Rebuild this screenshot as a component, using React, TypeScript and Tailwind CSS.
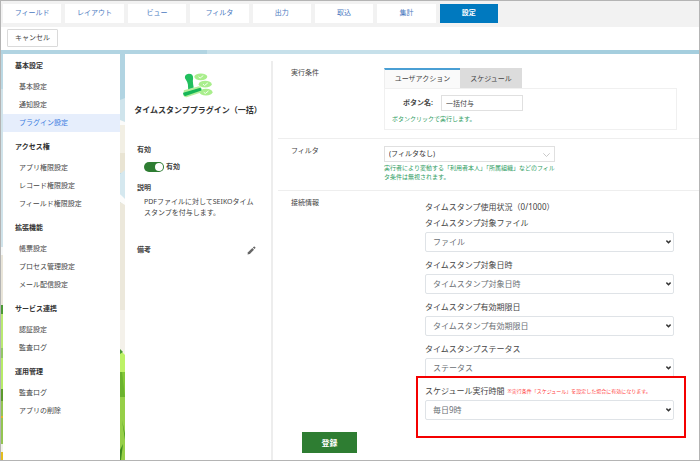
import { clsx } from 'clsx';
import { type ReactNode } from 'react';

const tabs = ['フィールド', 'レイアウト', 'ビュー', 'フィルタ', '出力', '取込', '集計', '設定'];

const menuGroups = [
    { title: '基本設定', items: ['基本設定', '通知設定', 'プラグイン設定'] },
    { title: 'アクセス権', items: ['アプリ権限設定', 'レコード権限設定', 'フィールド権限設定'] },
    { title: '拡張機能', items: ['帳票設定', 'プロセス管理設定', 'メール配信設定'] },
    { title: 'サービス連携', items: ['認証設定', '監査ログ'] },
    { title: '運用管理', items: ['監査ログ', 'アプリの削除'] },
];

const connectionFields = [
    { id: 'file', label: 'タイムスタンプ対象ファイル', value: 'ファイル' },
    { id: 'date', label: 'タイムスタンプ対象日時', value: 'タイムスタンプ対象日時' },
    { id: 'expiry', label: 'タイムスタンプ有効期限日', value: 'タイムスタンプ有効期限日' },
    { id: 'status', label: 'タイムスタンプステータス', value: 'ステータス' },
];

function LeftScenery() {
    return (
        <svg className="w-[2px] shrink-0 self-stretch" viewBox="0 0 2 406" preserveAspectRatio="none" aria-hidden="true">
            <rect width="2" height="406" fill="#bcd9e4" />
            <rect y="35" width="2" height="158" fill="#d0e3ea" />
            <rect y="193" width="2" height="8" fill="#f6f8f8" />
            <rect y="201" width="2" height="50" fill="#e9e5d9" />
            <rect y="251" width="2" height="9" fill="#4b9a34" />
            <rect y="260" width="2" height="34" fill="#b9ea72" />
            <rect y="294" width="2" height="10" fill="#93c765" />
            <rect y="304" width="2" height="31" fill="#b6ec68" />
            <rect y="335" width="2" height="12" fill="#5c9a2c" />
            <rect y="347" width="2" height="43" fill="#93c552" />
            <rect y="362" width="2" height="2" fill="#dfb62c" />
            <rect y="390" width="2" height="8" fill="#f1f3ea" />
            <rect y="398" width="2" height="8" fill="#e3bd1f" />
        </svg>
    );
}

function MiddleScenery() {
    return (
        <svg className="w-[5px] shrink-0 self-stretch" viewBox="0 0 5 406" preserveAspectRatio="none" aria-hidden="true">
            <rect width="5" height="406" fill="#b1d4e2" />
            <path d="M0 46L5 44V70H0Z" fill="#cfe4ec" />
            <path d="M0 66L5 68V75H0Z" fill="#fbfbfa" />
            <rect y="71" width="5" height="28" fill="#f2efe4" />
            <rect y="99" width="5" height="20" fill="#e9e4d3" />
            <path d="M0 120L5 116V147L0 140Z" fill="#d5e8ef" />
            <path d="M0 140L5 145V152L0 148Z" fill="#fcfcfb" />
            <path d="M0 148L5 151V256H0Z" fill="#ece8db" />
            <rect y="256" width="5" height="46" fill="#f4f1ea" />
            <path d="M0 296L5 301V318H0Z" fill="#bdf266" />
            <path d="M0 295L3 298L0 300Z" fill="#4b9a34" />
            <rect y="318" width="5" height="25" fill="#83c838" />
            <path d="M0 318H2L5 343H0Z" fill="#6cb32e" />
            <rect y="343" width="5" height="63" fill="#96cf48" />
            <path d="M2 366L5 380V386Z" fill="#4c9724" />
            <path d="M0 396L3 390L1 406H0Z" fill="#3e8a1f" />
        </svg>
    );
}

function StampIcon() {
    return (
        <svg className="h-[26px] w-[30px]" viewBox="0 0 30 26" aria-hidden="true">
            <g fill="#a9ee8c">
                <ellipse cx="17.8" cy="3.8" rx="6.5" ry="3.4" />
                <ellipse cx="22.2" cy="11.2" rx="6.5" ry="3.4" />
                <ellipse cx="23" cy="19.2" rx="6.5" ry="3.4" />
            </g>
            <path d="M.8 17.3L15 13.4Q18.5 13 18.5 16.5L18 19.5L3.5 24.3Q.5 24.5 .5 21Z" fill="#b3ef9b" />
            <path d="M1.9 5Q1.600 1 5.800 .7Q10.300 .8 10.100 5Q9.600 8 10.100 11L10.700 14.600L5.200 16.200L4.900 11.500Q4.400 8.800 1.900 5Z" fill="#21bf5e" />
            <path d="M.2 19.800L16.500 15Q18.900 14.700 18.300 17.400L2.500 22.900Q-.2 23.200 .2 19.800Z" fill="#17b657" />
            <g fill="none" stroke="#f4fff0" strokeWidth="1">
                <path d="M15.500 3.800L17.100 5.100L20.300 2.500" />
                <path d="M20 11.200L21.600 12.500L24.800 9.900" />
                <path d="M20.700 19.200L22.300 20.500L25.500 17.900" />
            </g>
        </svg>
    );
}

function SelectBox({ id, value }: { id: string; value: string }) {
    return (
        <div className="relative">
            <select
                id={id}
                defaultValue={value}
                className="block h-5 w-full appearance-none rounded-xs border border-[#dfe3e7] bg-white pr-4 pl-[7px] text-[8px] leading-[18px] text-[#6b7075]"
            >
                <option>{value}</option>
            </select>
            <svg
                className="pointer-events-none absolute top-2 right-[3px] h-1 w-[5px]"
                viewBox="0 0 5 4"
                fill="none"
                stroke="#333"
                strokeWidth="1.4"
                aria-hidden="true"
            >
                <path d="M.4 .6L2.500 2.800L4.600 .6" />
            </svg>
        </div>
    );
}

function Section({ title, last, children }: { title: string; last?: boolean; children: ReactNode }) {
    return (
        <section className={clsx('ml-[5px] flex pl-[13px]', !last && 'border-b border-[#eeeeee]')}>
            <h2 className="w-[93px] shrink-0 pt-[6px] leading-3">{title}</h2>
            <div className="flex-1">{children}</div>
        </section>
    );
}

export default function App() {
    return (
        <div
            lang="ja"
            className="flex min-h-screen flex-col border border-[#b4b4b4] bg-white font-['Noto_Sans','Noto_Sans_CJK_JP',sans-serif] text-[7px] leading-3 text-[#444]"
        >
            {/* TABS */}
            <nav className="bg-[#f2f2f2] pt-[3px] pb-1 pl-[2px]">
                <div className="grid max-w-[495px] grid-cols-8 gap-1">
                    {tabs.map((tab) => (
                        <a
                            key={tab}
                            href="#"
                            className={clsx(
                                'flex h-[19px] items-center justify-center pb-[2px]',
                                tab === '設定' ? 'bg-[#0079bf] font-bold text-white' : 'bg-white text-[#4a78c0]',
                            )}
                        >
                            {tab}
                        </a>
                    ))}
                </div>
            </nav>
            <div className="h-[23px] px-[6px] pt-[2px]">
                <button type="button" className="h-[18px] w-[51px] rounded-[1px] border border-[#dadada] bg-white pb-px leading-3">
                    キャンセル
                </button>
            </div>
            <div className="flex h-1 bg-[#a5cede]">
                <div className="w-[206px] bg-[#b1d4e2]" />
                <div className="w-[253px] bg-[#c6e0ea]" />
            </div>

            <div className="flex flex-1">
                <LeftScenery />

                {/* SIDEBAR */}
                <aside className="w-[117px] shrink-0">
                    {menuGroups.map((group) => (
                        <div key={group.title} className="pb-[3px]">
                            <h2 className="h-6 pt-[6px] pl-3 font-bold text-[#333]">{group.title}</h2>
                            <ul>
                                {group.items.map((item) => (
                                    <li key={item}>
                                        <a
                                            href="#"
                                            className={clsx(
                                                'flex h-[18px] items-center pl-4',
                                                item === 'プラグイン設定' && 'bg-[#e6eefc] text-[#3a7be0]',
                                            )}
                                        >
                                            {item}
                                        </a>
                                    </li>
                                ))}
                            </ul>
                        </div>
                    ))}
                </aside>

                <MiddleScenery />

                <main className="flex flex-1 pt-[7px]">
                    {/* PLUGIN */}
                    <div className="w-[148px] shrink-0 border-r-2 border-[#ededed] pl-3">
                        <div className="flex flex-col items-center pt-3 pr-3">
                            <StampIcon />
                            <h1 className="mt-[5px] text-[8px] font-bold whitespace-nowrap text-[#333]">
                                タイムスタンププラグイン（一括）
                            </h1>
                        </div>
                        <h3 className="mt-7 font-bold">有効</h3>
                        <label className="mt-[5px] ml-[7px] flex items-center gap-[2px] font-bold">
                            <input type="checkbox" defaultChecked className="peer sr-only" />
                            <span className="flex h-[10px] w-5 justify-end rounded-full bg-[#2e7d32] p-px">
                                <span className="size-2 rounded-full bg-white" />
                            </span>
                            有効
                        </label>
                        <h3 className="mt-[9px] font-bold">説明</h3>
                        <p className="mt-[2px] ml-[7px] leading-[11px]">
                            PDFファイルに対してSEIKOタイム
                            <br />
                            スタンプを付与します。
                        </p>
                        <div className="mt-[26px] flex items-center justify-between pr-[15px]">
                            <h3 className="font-bold">備考</h3>
                            <button type="button" aria-label="備考を編集">
                                <svg className="size-[9px]" viewBox="0 0 9 9" fill="#666" aria-hidden="true">
                                    <path d="M.5 8.500L1 6.200L5.300 2L7 3.700L2.800 8Z" />
                                    <path d="M5.800 1.500L6.700 .7Q7.300 .3 7.800 .8L8.300 1.300Q8.700 1.800 8.200 2.300L7.500 3.100Z" />
                                </svg>
                            </button>
                        </div>
                    </div>

                    {/* SETTINGS */}
                    <form className="flex-1">
                        <Section title="実行条件">
                            <div className="mt-[7px] mr-[22px] mb-2">
                                <div className="flex">
                                    <button type="button" className="h-5 w-[76px] border-t-2 border-l border-t-[#4a9fd4] border-l-[#eee] bg-[#fafafa]">
                                        ユーザアクション
                                    </button>
                                    <button type="button" className="h-5 w-[62px] bg-[#dcdcdc] pt-px">
                                        スケジュール
                                    </button>
                                </div>
                                <div className="h-[42px] border border-[#f0f0f0] px-[7px] pt-[6px]">
                                    <div className="flex items-center gap-2 pl-[11px]">
                                        <label htmlFor="button-name" className="font-bold">
                                            ボタン名:
                                        </label>
                                        <input
                                            id="button-name"
                                            defaultValue="一括付与"
                                            className="h-4 w-[82px] border border-[#e0e0e0] px-1 leading-3"
                                        />
                                    </div>
                                    <p className="mt-[2px] text-[6px] text-[#2e9d5f]">ボタンクリックで実行します。</p>
                                </div>
                            </div>
                        </Section>

                        <Section title="フィルタ">
                            <div className="mt-[7px] mb-2 w-[171px]">
                                <div className="relative">
                                    <select
                                        aria-label="フィルタ"
                                        className="block h-4 w-full appearance-none border border-[#e0e0e0] bg-white pl-1 leading-[14px] text-[#333]"
                                    >
                                        <option>(フィルタなし)</option>
                                    </select>
                                    <svg
                                        className="pointer-events-none absolute top-[7px] right-[5px] h-1 w-[7px]"
                                        viewBox="0 0 7 4"
                                        fill="none"
                                        stroke="#bbb"
                                        strokeWidth=".8"
                                        aria-hidden="true"
                                    >
                                        <path d="M.3 .3L3.500 3.500L6.700 .3" />
                                    </svg>
                                </div>
                                <p className="mt-[2px] text-[6px] leading-[9px] whitespace-nowrap text-[#2e9d5f]">
                                    実行者により変動する「利用者本人」「所属組織」などのフィル
                                    <br />
                                    タ条件は無視されます。
                                </p>
                            </div>
                        </Section>

                        <Section title="接続情報" last>
                            <div className="mr-[25px] ml-[41px] pt-[10px] text-[8px]">
                                <p className="mb-1">タイムスタンプ使用状況（0/1000）</p>
                                <div className="flex flex-col gap-[7px]">
                                    {connectionFields.map((field) => (
                                        <div key={field.id}>
                                            <label htmlFor={field.id} className="mb-[3px] block">
                                                {field.label}
                                            </label>
                                            <SelectBox id={field.id} value={field.value} />
                                        </div>
                                    ))}
                                    <div className="relative">
                                        <label htmlFor="schedule" className="mb-[3px] flex gap-[3px] whitespace-nowrap">
                                            スケジュール実行時間
                                            <span className="text-[5px] text-[#ff4040]">
                                                ※実行条件「スケジュール」を設定した場合に有効になります。
                                            </span>
                                        </label>
                                        <SelectBox id="schedule" value="毎日9時" />
                                        <div className="pointer-events-none absolute -top-[9px] -right-3 -bottom-[18px] -left-[9px] border-2 border-[#f40000]" />
                                    </div>
                                </div>
                            </div>
                        </Section>

                        <button type="submit" className="mt-3 mb-[6px] ml-[29px] block h-[21px] w-[55px] bg-[#2e7d32] text-[8px] font-bold text-white">
                            登録
                        </button>
                    </form>
                </main>
            </div>
        </div>
    );
}
